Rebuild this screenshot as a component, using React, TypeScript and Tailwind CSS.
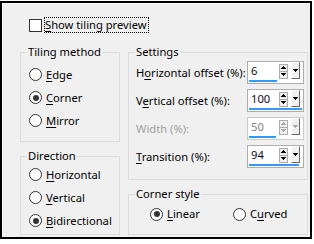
import React from "react";

const Radio = ({ checked }: { checked?: boolean }) => (
  <span className="flex h-[13px] w-[13px] shrink-0 items-center justify-center rounded-full border border-[#333333] bg-white">
    {checked && <span className="h-[6px] w-[6px] rounded-full bg-[#333333]" />}
  </span>
);

const U = ({ children }: { children: React.ReactNode }) => (
  <span className="underline decoration-1 underline-offset-[2px]">{children}</span>
);

const RadioRow = ({
  checked,
  children,
  className,
}: {
  checked?: boolean;
  children: React.ReactNode;
  className?: string;
}) => (
  <div className={"flex items-center gap-[4px] " + (className ?? "h-[23px]")}>
    <Radio checked={checked} />
    <span className="leading-[16px]">{children}</span>
  </div>
);

const Group = ({
  label,
  className,
  children,
}: {
  label: string;
  className: string;
  children: React.ReactNode;
}) => (
  <fieldset className={"border border-[#dcdcdc] " + className}>
    <legend className="ml-[6px] px-[1px] leading-[16px]">{label}</legend>
    {children}
  </fieldset>
);

const Up = ({ color }: { color: string }) => (
  <svg width="5" height="3" viewBox="0 0 5 3" shapeRendering="crispEdges">
    <polygon points="2.5,0 5,3 0,3" fill={color} />
  </svg>
);
const Down = ({ color }: { color: string }) => (
  <svg width="5" height="3" viewBox="0 0 5 3" shapeRendering="crispEdges">
    <polygon points="0,0 5,0 2.5,3" fill={color} />
  </svg>
);

const SpinInput = ({
  value,
  pct,
  disabled,
}: {
  value: string;
  pct: number;
  disabled?: boolean;
}) => {
  const arrow = disabled ? "#a8a8a8" : "#000000";
  return (
    <div
      className={
        "mr-[3px] flex h-[23px] w-[57px] flex-col border bg-white " +
        (disabled ? "border-[#cccccc]" : "border-[#abadb3]")
      }
    >
      <div className="flex h-[17px] items-center">
        <span
          className={
            "flex-1 pl-[3px] leading-[16px] " + (disabled ? "text-[#838383]" : "text-[#0a0a1e]")
          }
        >
          {value}
        </span>
        <div className="mt-px flex h-[15px] w-[9px] flex-col border border-[#adadad] bg-[#f0f0f0]">
          <div className="flex flex-1 items-center justify-center border-b border-[#adadad]">
            <Up color={arrow} />
          </div>
          <div className="flex flex-1 items-center justify-center">
            <Down color={arrow} />
          </div>
        </div>
        <div className="ml-[3px] mr-[3px] flex h-[17px] w-[9px] items-center justify-center border border-t-white border-l-white border-r-[#696969] border-b-[#696969] bg-[#f0f0f0]">
          <Down color={arrow} />
        </div>
      </div>
      <div className="mx-px mt-px h-[2px]">
        <div className="h-[2px] bg-[#3399ff]" style={{ width: `${pct * 53}px` }} />
      </div>
    </div>
  );
};

const SettingRow = ({
  label,
  value,
  pct,
  disabled,
}: {
  label: React.ReactNode;
  value: string;
  pct: number;
  disabled?: boolean;
}) => (
  <div className="flex h-[23px] items-center">
    <span className={"flex-1 pl-[7px] leading-[16px] " + (disabled ? "text-[#a0a0a0]" : "")}>
      {label}
    </span>
    <SpinInput value={value} pct={pct} disabled={disabled} />
  </div>
);

export default function App() {
  return (
    <div className="h-[244px] w-[314px] bg-white font-['Noto_Sans',sans-serif] text-[11.2px] text-black">
      <div className="mt-px h-[238px] w-[312px] border-2 border-black bg-[#f0f0f0]">
        <div className="h-full border-l border-t border-white pl-[17px] pt-[13px]">
          <div className="ml-[9px] flex h-[16px] items-center">
            <span className="h-[13px] w-[13px] border border-[#333333] bg-white" />
            <span className="ml-[2px] border border-dotted border-black pr-px leading-[14px]">
              <U>S</U>how tiling preview
            </span>
          </div>
          <div className="mt-[11px] flex gap-[8px]">
            <div className="flex w-[100px] flex-col gap-[6px]">
              <Group label="Tiling method" className="h-[98px]">
                <div className="flex flex-col pl-[8px] pt-[3px]">
                  <RadioRow>
                    <U>E</U>dge
                  </RadioRow>
                  <RadioRow checked>
                    <U>C</U>orner
                  </RadioRow>
                  <RadioRow>
                    <U>M</U>irror
                  </RadioRow>
                </div>
              </Group>
              <Group label="Direction" className="h-[87px]">
                <div className="-mt-px flex flex-col pl-[8px]">
                  <RadioRow>
                    <U>H</U>orizontal
                  </RadioRow>
                  <RadioRow>
                    <U>V</U>ertical
                  </RadioRow>
                  <RadioRow checked>
                    <U>B</U>idirectional
                  </RadioRow>
                </div>
              </Group>
            </div>
            <div className="flex w-[180px] flex-col gap-[6px]">
              <Group label="Settings" className="h-[136px]">
                <div className="flex flex-col gap-[5px] pt-px">
                  <SettingRow
                    label={
                      <>
                        H<U>o</U>rizontal offset (%):
                      </>
                    }
                    value="6"
                    pct={0.53}
                  />
                  <SettingRow
                    label={
                      <>
                        V<U>e</U>rtical offset (%):
                      </>
                    }
                    value="100"
                    pct={1}
                  />
                  <SettingRow label="Width (%):" value="50" pct={0.5} disabled />
                  <SettingRow
                    label={
                      <>
                        <U>T</U>ransition (%):
                      </>
                    }
                    value="94"
                    pct={0.94}
                  />
                </div>
              </Group>
              <Group label="Corner style" className="h-[49px]">
                <div className="flex pl-[21px]">
                  <RadioRow checked className="h-[24px] w-[83px]">
                    <U>L</U>inear
                  </RadioRow>
                  <RadioRow className="h-[24px]">
                    C<U>u</U>rved
                  </RadioRow>
                </div>
              </Group>
            </div>
          </div>
        </div>
      </div>
    </div>
  );
}
